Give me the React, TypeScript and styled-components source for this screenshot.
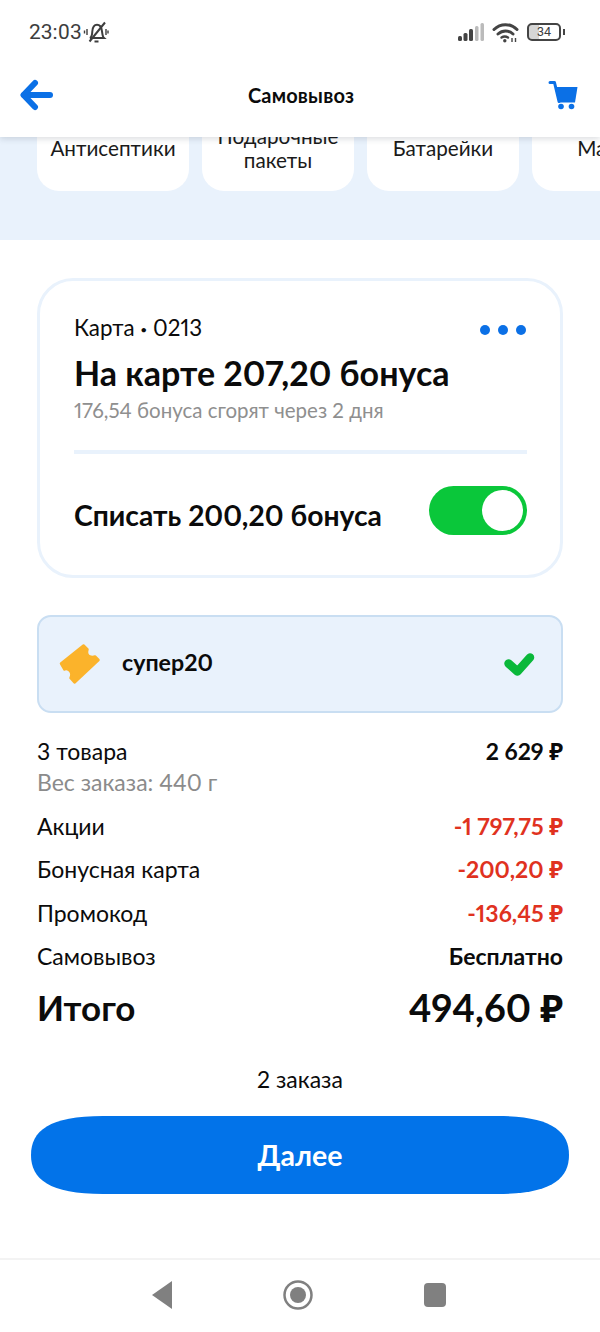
import React from 'react';
import styled, { createGlobalStyle } from 'styled-components';

const GlobalStyle = createGlobalStyle`
  html, body {
    margin: 0;
    padding: 0;
    background: #fff;
  }
  * {
    box-sizing: border-box;
  }
`;

const Page = styled.div`
  width: 600px;
  height: 1332px;
  overflow: hidden;
  display: flex;
  flex-direction: column;
  background: #fff;
  color: #0b0b0b;
  font-family: Lato, 'Noto Sans', sans-serif;
  font-variant-numeric: proportional-nums lining-nums;
`;

const TopArea = styled.header`
  position: relative;
  z-index: 2;
  height: 137px;
  flex: none;
  background: #fff;
  box-shadow: 0 2px 6px rgba(40, 50, 70, 0.16);
`;

const StatusBar = styled.div`
  height: 64px;
  padding: 0 35px 0 29px;
  display: flex;
  align-items: center;
  justify-content: space-between;
  font-family: Roboto, sans-serif;
  color: #3d3d3d;
`;

const StatusGroup = styled.div<{ $gap: number }>`
  display: flex;
  align-items: center;
  gap: ${(props) => props.$gap}px;
`;

const Clock = styled.span`
  font-size: 21px;
`;

const BatteryBox = styled.div`
  width: 34px;
  height: 18px;
  border: 2px solid #444;
  border-radius: 5px;
  display: flex;
  align-items: center;
  justify-content: center;
  font-size: 12.5px;
  line-height: 1;
  background: linear-gradient(90deg, #d6d6d6 34%, #fff 34%);
`;

const BatteryCap = styled.div`
  width: 2px;
  height: 6px;
  margin-left: 2px;
  background: #444;
`;

const Battery = styled.div`
  display: flex;
  align-items: center;
`;

const NavRow = styled.div`
  height: 73px;
  padding: 0 22px 12px 20px;
  display: flex;
  align-items: center;
  justify-content: space-between;
`;

const NavTitle = styled.div`
  font-size: 20px;
  font-weight: 700;
  letter-spacing: 0.2px;
`;

const ChipStrip = styled.div`
  height: 103px;
  flex: none;
  overflow: hidden;
  background: #e9f2fc;
  display: flex;
  gap: 13px;
  padding-left: 37px;
`;

const Chip = styled.div`
  width: 152px;
  height: 86px;
  flex: none;
  margin-top: -32px;
  padding: 0 8px 1px;
  border-radius: 22px;
  background: #fff;
  display: flex;
  align-items: center;
  justify-content: center;
  text-align: center;
  font-size: 20.7px;
  line-height: 24px;
  color: #1a1a1a;
`;

const Content = styled.main`
  flex: 1;
  padding: 38px 37px 0;
`;

const BonusCard = styled.section`
  height: 300px;
  padding: 33px 33px 0 34px;
  border: 3px solid #e9f2fc;
  border-radius: 36px;
`;

const CardTop = styled.div`
  display: flex;
  align-items: center;
  justify-content: space-between;
`;

const CardLabel = styled.div`
  font-size: 22.4px;
  line-height: 28px;
`;

const CardBullet = styled.span`
  font-size: 12px;
  vertical-align: 2px;
`;

const Dots = styled.div`
  display: flex;
  gap: 8px;
  margin-right: 1px;
  margin-top: 1px;
`;

const Dot = styled.span`
  width: 10px;
  height: 10px;
  border-radius: 50%;
  background: #0b70e6;
`;

const BonusTitle = styled.div`
  margin-top: 8px;
  font-size: 34px;
  line-height: 42px;
  font-weight: 700;
`;

const BonusNote = styled.div`
  margin-top: 4px;
  font-size: 20.5px;
  line-height: 24px;
  color: #8f8f8f;
`;

const Divider = styled.div`
  height: 4px;
  margin-top: 28px;
  background: #e9f2fc;
`;

const ToggleRow = styled.div`
  margin-top: 32px;
  display: flex;
  align-items: center;
  justify-content: space-between;
`;

const ToggleLabel = styled.div`
  padding-top: 8px;
  font-size: 28.3px;
  font-weight: 700;
`;

const Toggle = styled.div`
  width: 98px;
  height: 49px;
  padding: 4px;
  border-radius: 25px;
  background: #0ac73a;
  display: flex;
  justify-content: flex-end;
`;

const ToggleKnob = styled.div`
  width: 41px;
  height: 41px;
  border-radius: 50%;
  background: #fff;
`;

const PromoBox = styled.section`
  height: 98px;
  margin-top: 37px;
  padding: 0 26px 0 20px;
  border: 2px solid #c9def2;
  border-radius: 14px;
  background: #e9f2fc;
  display: flex;
  align-items: center;
`;

const PromoCode = styled.div`
  flex: 1;
  margin-left: 21px;
  padding-bottom: 4px;
  font-size: 23.2px;
  font-weight: 700;
`;

const Summary = styled.section`
  margin-top: 21px;
`;

const Row = styled.div`
  height: 43.5px;
  display: flex;
  align-items: center;
  justify-content: space-between;
  font-size: 23px;
`;

const FirstRow = styled(Row)`
  height: 34px;
`;

const Weight = styled.div`
  height: 28px;
  margin-bottom: 8px;
  font-size: 23px;
  line-height: 28px;
  color: #8b8b8b;
`;

const Amount = styled.span<{ $red?: boolean }>`
  font-weight: 700;
  color: ${(props) => (props.$red ? '#e0321f' : '#0b0b0b')};
`;

const TotalRow = styled.div`
  height: 58px;
  display: flex;
  align-items: center;
  justify-content: space-between;
`;

const TotalLabel = styled.span`
  font-size: 35px;
  font-weight: 700;
`;

const TotalValue = styled.span`
  font-size: 38px;
  font-weight: 700;
`;

const OrdersCount = styled.div`
  margin-top: 29px;
  text-align: center;
  font-size: 23px;
  line-height: 28px;
`;

const NextButton = styled.button`
  display: block;
  width: 538px;
  height: 78px;
  margin: 23px 0 0 -6px;
  border: none;
  background: #0273e9;
  clip-path: path('M 72 0 H 466 C 520 0 538 15 538 39 C 538 63 520 78 466 78 H 72 C 18 78 0 63 0 39 C 0 15 18 0 72 0 Z');
  color: #fff;
  font-family: inherit;
  font-size: 28.5px;
  font-weight: 700;
`;

const BottomNav = styled.nav`
  height: 74px;
  flex: none;
  border-top: 2px solid #f3f3f3;
  padding: 0 0 3px 151px;
  display: flex;
  align-items: center;
  gap: 109px;
`;

const BackArrow = () => (
  <svg width="34" height="32" viewBox="0 0 34 32" fill="none" stroke="#0b70e6" strokeWidth="6" strokeLinecap="round" strokeLinejoin="round">
    <path d="M30 16H4" />
    <path d="M15 4L3.500 16L15 28" />
  </svg>
);

const CartIcon = () => (
  <svg width="30" height="30" viewBox="0 0 30 30">
    <path d="M2 2.500h4.500l4.500 19" fill="none" stroke="#0b70e6" strokeWidth="3" strokeLinecap="round" strokeLinejoin="round" />
    <path d="M8.500 7H29.500L27 22.500H11.500z" fill="#0b70e6" />
    <circle cx="13" cy="26.500" r="2.800" fill="#0b70e6" />
    <circle cx="23.500" cy="26.500" r="2.800" fill="#0b70e6" />
  </svg>
);

const MutedBell = () => (
  <svg width="26" height="22" viewBox="0 0 26 22" fill="none" stroke="#3d3d3d" strokeWidth="2">
    <path d="M7 17c2-1 2-3 2.300-6.500C9.600 6.500 11 3.800 14 3.800c3 0 4.500 2.500 5 6.500.4 3 .6 5.500 2 6.700z" />
    <path d="M11.500 20.500h4" />
    <path d="M22 1.500L6.500 20.500" />
    <path d="M4 8v6M1.500 9.500v3M23 8v6M25 9.500v3" strokeWidth="1.400" />
  </svg>
);

const SignalIcon = () => (
  <svg width="26" height="18" viewBox="0 0 26 18">
    <rect x="0" y="13" width="4" height="5" rx="1.500" fill="#444" />
    <rect x="5.500" y="10" width="4" height="8" rx="1.500" fill="#444" />
    <rect x="11" y="6" width="4" height="12" rx="1.500" fill="#444" />
    <rect x="17" y="3" width="3.500" height="15" rx="1.500" fill="#bbb" />
    <rect x="22.500" y="0" width="3.500" height="18" rx="1.500" fill="#bbb" />
  </svg>
);

const WifiIcon = () => (
  <svg width="27" height="21" viewBox="0 0 27 21" fill="none" stroke="#444" strokeWidth="3" strokeLinecap="round">
    <path d="M2 7.500c6.500-6.500 16.500-6.500 23 0" />
    <path d="M6 12c4.500-4 10.500-4 15 0" />
    <path d="M9.500 15.500c2-1.300 4.500-1.300 6.500 0" strokeWidth="2.400" />
    <circle cx="12.800" cy="18.700" r="1.700" fill="#444" stroke="none" />
    <path d="M20 16v4M23.500 16v4" strokeWidth="1.400" strokeLinecap="butt" />
  </svg>
);

const TicketIcon = () => (
  <svg width="42" height="42" viewBox="0 0 42 42">
    <path
      d="M24.500 2.500L28.500 6.500Q27 11.500 30 13T36 13.500L39.500 17L15.500 39.500L11.500 35Q13.500 31 11 28T5.500 26.500L2 20.500z"
      fill="#fbb32b"
      stroke="#fbb32b"
      strokeWidth="2.500"
      strokeLinejoin="round"
    />
  </svg>
);

const CheckIcon = () => (
  <svg width="32" height="26" viewBox="0 0 32 26" fill="none" stroke="#0ab83a" strokeWidth="8.500" strokeLinecap="round" strokeLinejoin="round">
    <path d="M5.500 12.500l9 8L27 6.500" />
  </svg>
);

const NavBack = () => (
  <svg width="22" height="30" viewBox="0 0 22 30">
    <path d="M21 1v28L1 15z" fill="#808080" />
  </svg>
);

const NavHome = () => (
  <svg width="32" height="34" viewBox="0 0 32 34" fill="none">
    <circle cx="16" cy="17" r="13.500" stroke="#808080" strokeWidth="2.500" />
    <circle cx="16" cy="17" r="8" fill="#808080" />
  </svg>
);

const NavRecent = () => (
  <svg width="24" height="26" viewBox="0 0 24 26">
    <rect x="1" y="1" width="22" height="24" rx="4" fill="#808080" />
  </svg>
);

const chips = ['Антисептики', 'Подарочные пакеты', 'Батарейки', 'Маски'];

const rows = [
  { label: 'Акции', value: '-1 797,75 ₽', red: true },
  { label: 'Бонусная карта', value: '-200,20 ₽', red: true },
  { label: 'Промокод', value: '-136,45 ₽', red: true },
  { label: 'Самовывоз', value: 'Бесплатно', red: false },
];

const App = () => {
  return (
    <Page>
      <GlobalStyle />
      <TopArea>
        <StatusBar>
          <StatusGroup $gap={1}>
            <Clock>23:03</Clock>
            <MutedBell />
          </StatusGroup>
          <StatusGroup $gap={8}>
            <SignalIcon />
            <WifiIcon />
            <Battery>
              <BatteryBox>34</BatteryBox>
              <BatteryCap />
            </Battery>
          </StatusGroup>
        </StatusBar>
        <NavRow>
          <BackArrow />
          <NavTitle>Самовывоз</NavTitle>
          <CartIcon />
        </NavRow>
      </TopArea>

      <ChipStrip>
        {chips.map((chip) => (
          <Chip key={chip}>{chip}</Chip>
        ))}
      </ChipStrip>

      <Content>
        <BonusCard>
          <CardTop>
            <CardLabel>
              Карта <CardBullet>•</CardBullet> 0213
            </CardLabel>
            <Dots>
              <Dot />
              <Dot />
              <Dot />
            </Dots>
          </CardTop>
          <BonusTitle>На карте 207,20 бонуса</BonusTitle>
          <BonusNote>176,54 бонуса сгорят через 2 дня</BonusNote>
          <Divider />
          <ToggleRow>
            <ToggleLabel>Списать 200,20 бонуса</ToggleLabel>
            <Toggle>
              <ToggleKnob />
            </Toggle>
          </ToggleRow>
        </BonusCard>

        <PromoBox>
          <TicketIcon />
          <PromoCode>супер20</PromoCode>
          <CheckIcon />
        </PromoBox>

        <Summary>
          <FirstRow>
            <span>3 товара</span>
            <Amount>2 629 ₽</Amount>
          </FirstRow>
          <Weight>Вес заказа: 440 г</Weight>
          {rows.map((row) => (
            <Row key={row.label}>
              <span>{row.label}</span>
              <Amount $red={row.red}>{row.value}</Amount>
            </Row>
          ))}
          <TotalRow>
            <TotalLabel>Итого</TotalLabel>
            <TotalValue>494,60 ₽</TotalValue>
          </TotalRow>
        </Summary>

        <OrdersCount>2 заказа</OrdersCount>
        <NextButton>Далее</NextButton>
      </Content>

      <BottomNav>
        <NavBack />
        <NavHome />
        <NavRecent />
      </BottomNav>
    </Page>
  );
};

export default App;
